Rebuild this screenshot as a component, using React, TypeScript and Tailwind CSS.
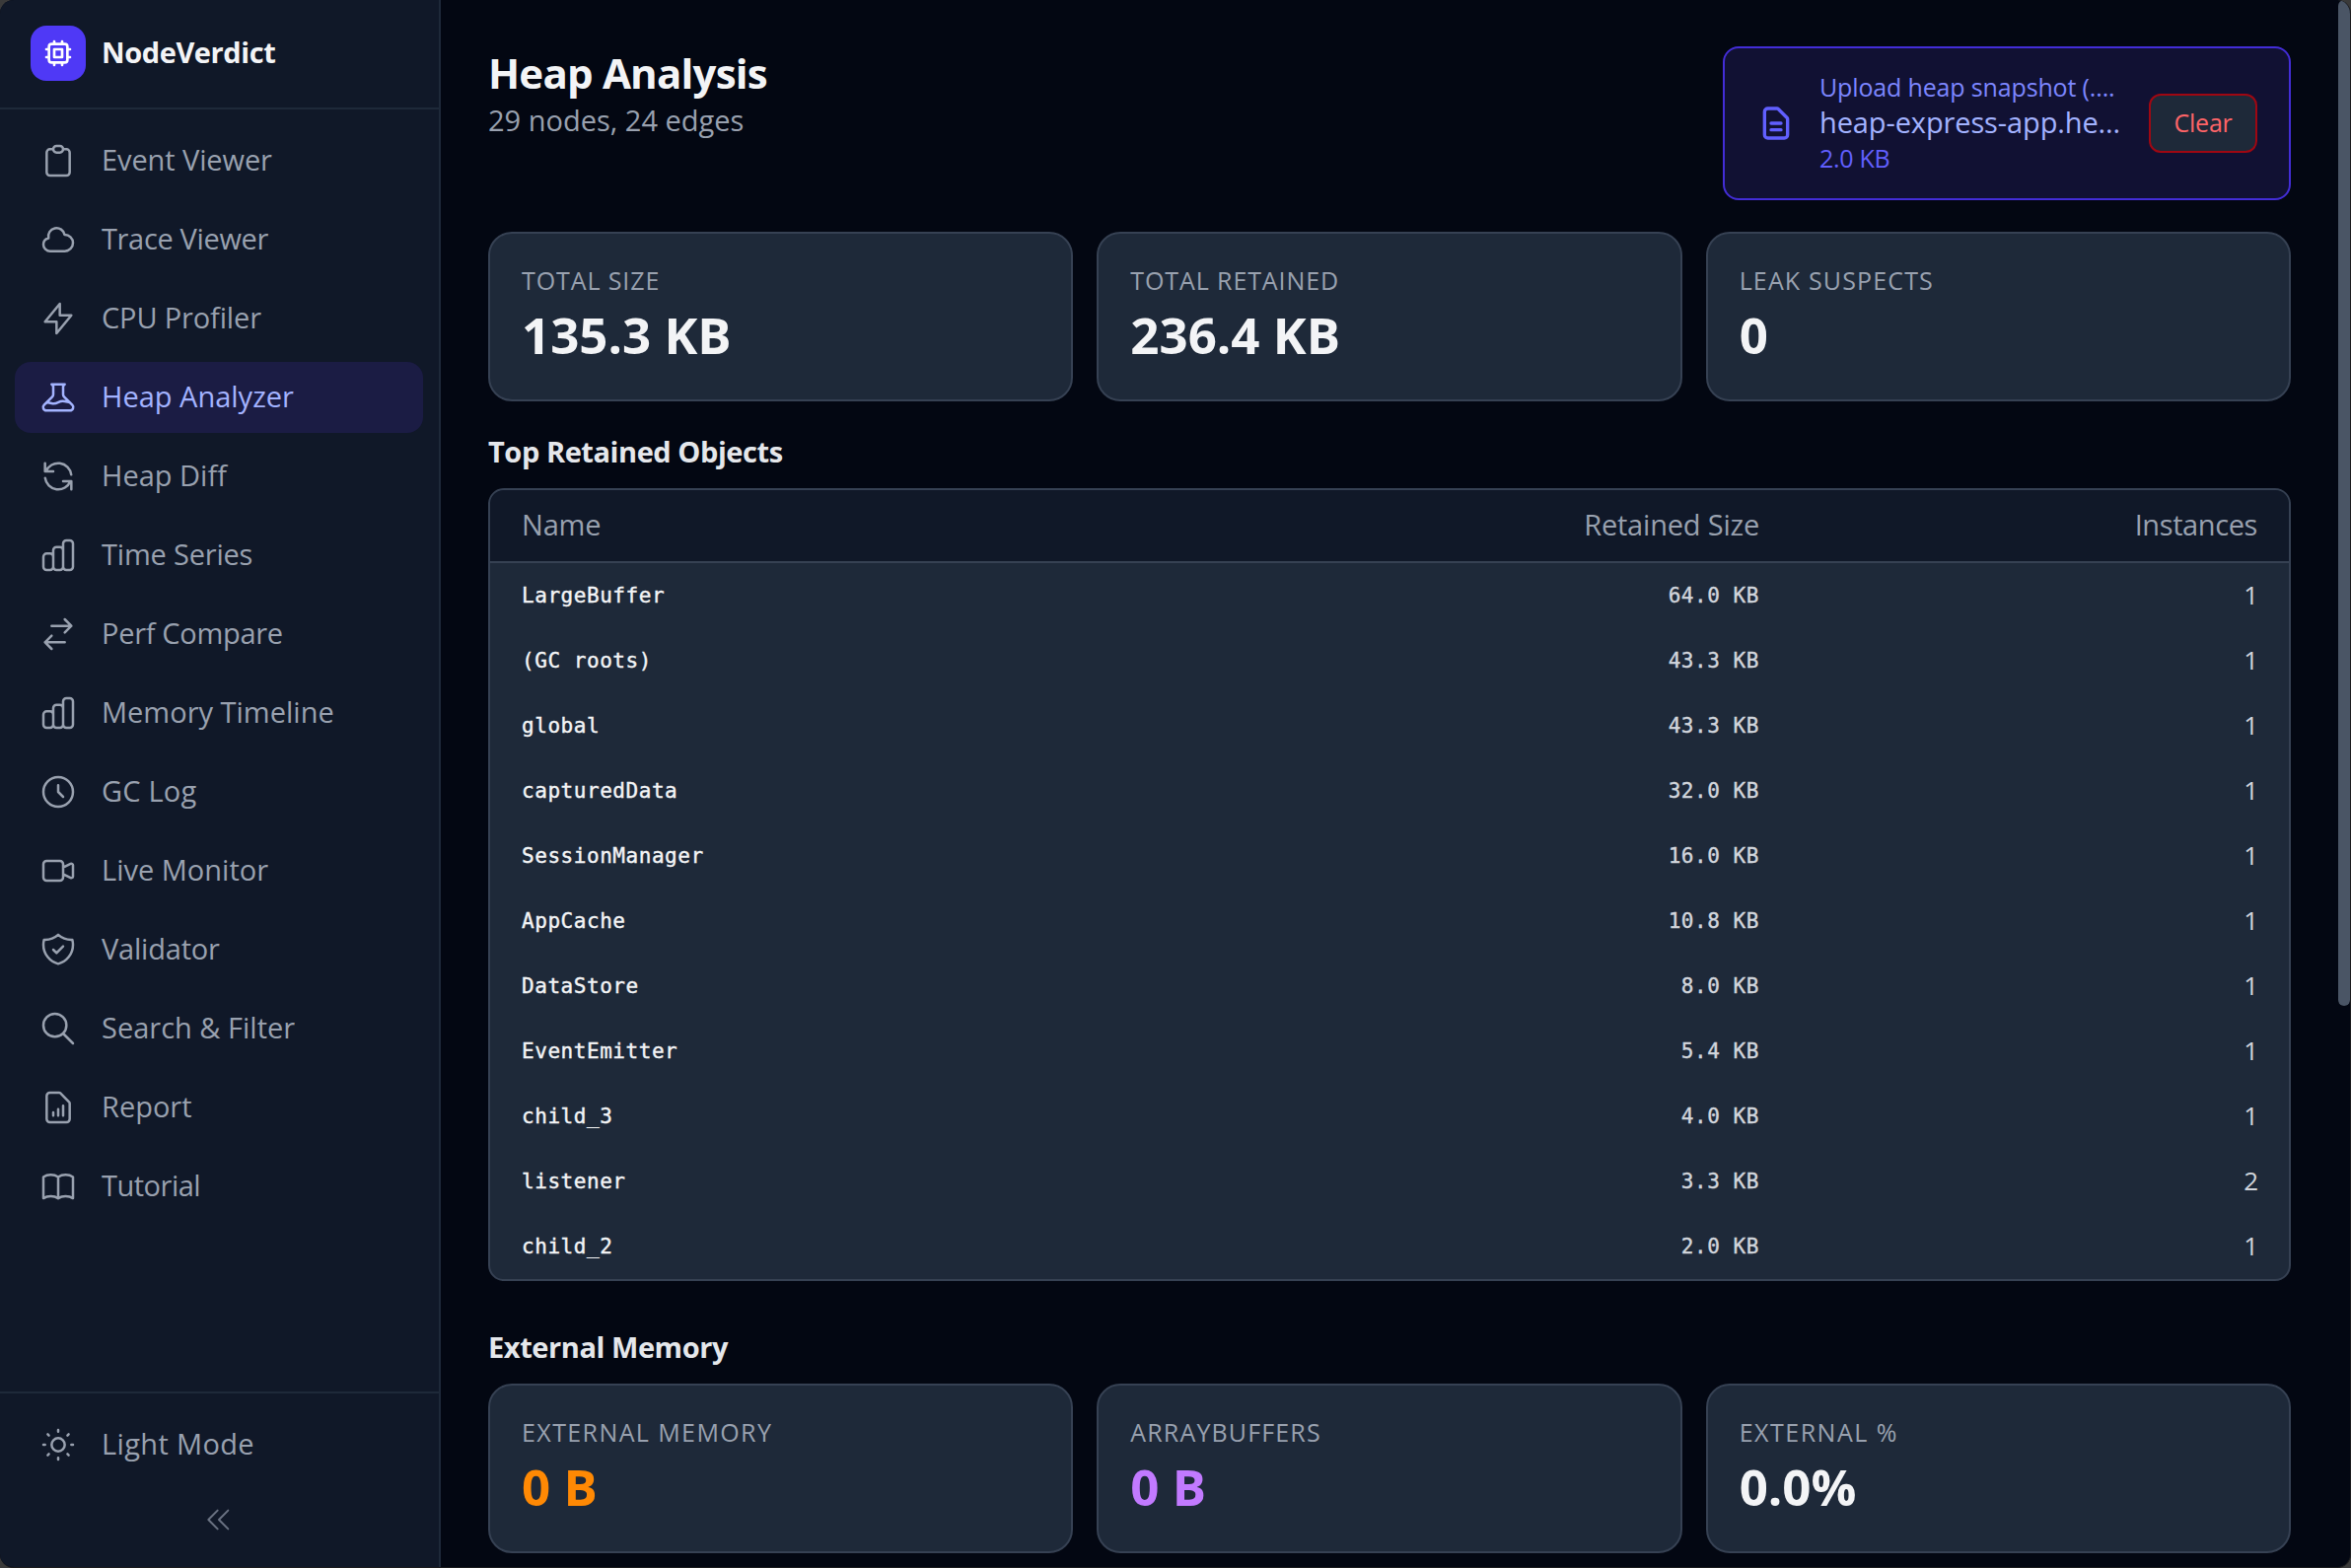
import React from 'react';
import { clsx } from 'clsx';

interface IconProps {
  d: string;
  className?: string;
  strokeWidth?: number;
}

const Icon: React.FC<IconProps> = ({ d, className, strokeWidth = 1.5 }) => (
  <svg className={clsx('shrink-0', className)} fill="none" viewBox="0 0 24 24" stroke="currentColor" strokeWidth={strokeWidth}>
    <path strokeLinecap="round" strokeLinejoin="round" d={d} />
  </svg>
);

const BARS =
  'M9 19v-6a2 2 0 00-2-2H5a2 2 0 00-2 2v6a2 2 0 002 2h2a2 2 0 002-2zm0 0V9a2 2 0 012-2h2a2 2 0 012 2v10m-6 0a2 2 0 002 2h2a2 2 0 002-2m0 0V5a2 2 0 012-2h2a2 2 0 012 2v14a2 2 0 01-2 2h-2a2 2 0 01-2-2z';

interface NavItemProps {
  label: string;
  d: string;
  active?: boolean;
  labelClass?: string;
}

const NAV_ITEMS: NavItemProps[] = [
  { label: 'Event Viewer', labelClass: 'tracking-[-0.1px]', d: 'M9 5H7a2 2 0 00-2 2v12a2 2 0 002 2h10a2 2 0 002-2V7a2 2 0 00-2-2h-2M9 5a2 2 0 002 2h2a2 2 0 002-2M9 5a2 2 0 012-2h2a2 2 0 012 2' },
  { label: 'Trace Viewer', labelClass: 'tracking-[-0.35px]', d: 'M3 15a4 4 0 004 4h9a5 5 0 10-.1-9.999 5.002 5.002 0 10-9.78 2.096A4.001 4.001 0 003 15z' },
  { label: 'CPU Profiler', labelClass: 'tracking-[-0.15px]', d: 'M13 10V3L4 14h7v7l9-11h-7z' },
  { label: 'Heap Analyzer', active: true, d: 'M19.428 15.428a2 2 0 00-1.022-.547l-2.387-.477a6 6 0 00-3.86.517l-.318.158a6 6 0 01-3.86.517L6.05 15.21a2 2 0 00-1.806.547M8 4h8l-1 1v5.172a2 2 0 00.586 1.414l5 5c1.26 1.26.367 3.414-1.415 3.414H4.828c-1.782 0-2.674-2.154-1.414-3.414l5-5A2 2 0 009 10.172V5L8 4z' },
  { label: 'Heap Diff', d: 'M4 4v5h.582m15.356 2A8.001 8.001 0 004.582 9m0 0H9m11 11v-5h-.581m0 0a8.003 8.003 0 01-15.357-2m15.357 2H15' },
  { label: 'Time Series', labelClass: 'tracking-[-0.2px]', d: BARS },
  { label: 'Perf Compare', labelClass: 'tracking-[-0.3px]', d: 'M8 7h12m0 0l-4-4m4 4l-4 4m0 6H4m0 0l4 4m-4-4l4-4' },
  { label: 'Memory Timeline', d: BARS },
  { label: 'GC Log', labelClass: 'tracking-[0.2px]', d: 'M12 8v4l3 3m6-3a9 9 0 11-18 0 9 9 0 0118 0z' },
  { label: 'Live Monitor', d: 'M15 10l4.553-2.276A1 1 0 0121 8.618v6.764a1 1 0 01-1.447.894L15 14M5 18h8a2 2 0 002-2V8a2 2 0 00-2-2H5a2 2 0 00-2 2v8a2 2 0 002 2z' },
  { label: 'Validator', labelClass: 'tracking-[-0.2px]', d: 'M9 12l2 2 4-4m5.618-4.016A11.955 11.955 0 0112 2.944a11.955 11.955 0 01-8.618 3.04A12.02 12.02 0 003 9c0 5.591 3.824 10.29 9 11.622 5.176-1.332 9-6.03 9-11.622 0-1.042-.133-2.052-.382-3.016z' },
  { label: 'Search & Filter', d: 'M21 21l-6-6m2-5a7 7 0 11-14 0 7 7 0 0114 0z' },
  { label: 'Report', d: 'M9 17v-2m3 2v-4m3 4v-6m2 10H7a2 2 0 01-2-2V5a2 2 0 012-2h5.586a1 1 0 01.707.293l5.414 5.414a1 1 0 01.293.707V19a2 2 0 01-2 2z' },
  { label: 'Tutorial', labelClass: 'tracking-[-0.5px]', d: 'M12 6.253v13m0-13C10.832 5.477 9.246 5 7.5 5S4.168 5.477 3 6.253v13C4.168 18.477 5.754 18 7.5 18s3.332.477 4.5 1.253m0-13C13.168 5.477 14.754 5 16.5 5c1.747 0 3.332.477 4.5 1.253v13C19.832 18.477 18.247 18 16.5 18c-1.746 0-3.332.477-4.5 1.253' },
];

const OBJECTS = [
  { name: 'LargeBuffer', size: '64.0 KB', instances: 1 },
  { name: '(GC roots)', size: '43.3 KB', instances: 1 },
  { name: 'global', size: '43.3 KB', instances: 1 },
  { name: 'capturedData', size: '32.0 KB', instances: 1 },
  { name: 'SessionManager', size: '16.0 KB', instances: 1 },
  { name: 'AppCache', size: '10.8 KB', instances: 1 },
  { name: 'DataStore', size: '8.0 KB', instances: 1 },
  { name: 'EventEmitter', size: '5.4 KB', instances: 1 },
  { name: 'child_3', size: '4.0 KB', instances: 1 },
  { name: 'listener', size: '3.3 KB', instances: 2 },
  { name: 'child_2', size: '2.0 KB', instances: 1 },
];

const NavItem: React.FC<NavItemProps> = ({ label, d, active, labelClass }) => (
  <button
    className={clsx(
      'flex h-[72px] w-full shrink-0 items-center gap-6 rounded-2xl px-6 text-[29px]',
      active ? 'bg-[#1b1c44] text-indigo-300' : 'text-gray-400'
    )}
  >
    <Icon d={d} className="size-10" />
    <span className={clsx('pb-[3px] leading-[37px] whitespace-nowrap', labelClass)}>{label}</span>
  </button>
);

interface StatCardProps {
  label: string;
  value: string;
  labelClass?: string;
  valueClass?: string;
}

const StatCard: React.FC<StatCardProps> = ({ label, value, labelClass = 'tracking-[0.9px]', valueClass = 'text-gray-100' }) => (
  <div className="h-[172px] rounded-3xl border-2 border-gray-700 bg-gray-800 p-8">
    <p className={clsx('pb-0.5 text-[25px] leading-[30px] text-gray-400 uppercase', labelClass)}>{label}</p>
    <p className={clsx('mt-2 pb-[3px] text-[51px] leading-[61px] font-bold', valueClass)}>{value}</p>
  </div>
);

const Sidebar: React.FC = () => (
  <aside className="flex w-[447px] shrink-0 flex-col border-r-2 border-gray-800 bg-gray-900">
    <div className="flex h-[111px] shrink-0 items-center gap-4 border-b-2 border-gray-800 pb-px pl-[31px]">
      <div className="flex size-14 items-center justify-center rounded-2xl bg-indigo-600">
        <Icon
          d="M9 3v2m6-2v2M9 19v2m6-2v2M5 9H3m2 6H3m18-6h-2m2 6h-2M7 19h10a2 2 0 002-2V7a2 2 0 00-2-2H7a2 2 0 00-2 2v10a2 2 0 002 2zM9 9h6v6H9V9z"
          className="size-8 text-white"
          strokeWidth={2}
        />
      </div>
      <span className="pb-[3px] text-[29px] leading-[37px] font-bold tracking-[-0.4px] text-gray-100">NodeVerdict</span>
    </div>
    <nav className="flex flex-1 flex-col gap-2 py-4 pr-4 pl-[15px]">
      {NAV_ITEMS.map((item) => (
        <NavItem key={item.label} {...item} />
      ))}
    </nav>
    <div className="flex flex-col gap-2 border-t-2 border-gray-800 py-4 pr-4 pl-[15px]">
      <NavItem
        label="Light Mode"
        labelClass="tracking-[0.35px]"
        d="M12 3v1m0 16v1m9-9h-1M4 12H3m15.364 6.364l-.707-.707M6.343 6.343l-.707-.707m12.728 0l-.707.707M6.343 17.657l-.707.707M16 12a4 4 0 11-8 0 4 4 0 018 0z"
      />
      <button className="flex h-16 items-center justify-center text-gray-500">
        <Icon d="M11 19l-7-7 7-7m8 14l-7-7 7-7" className="size-8" />
      </button>
    </div>
  </aside>
);

const UploadBox: React.FC = () => (
  <div className="flex h-[156px] w-[576px] items-center gap-6 rounded-2xl border-2 border-indigo-700 bg-[#111133] px-8">
    <Icon
      d="M9 12h6m-6 4h6m2 5H7a2 2 0 01-2-2V5a2 2 0 012-2h5.586a1 1 0 01.707.293l5.414 5.414a1 1 0 01.293.707V19a2 2 0 01-2 2z"
      className="size-10 text-indigo-500"
      strokeWidth={2}
    />
    <div className="min-w-0 flex-1 whitespace-nowrap">
      <p className="pb-0.5 text-[25px] leading-[30px] tracking-[-0.15px] text-indigo-400">Upload heap snapshot (....</p>
      <p className="pb-[3px] text-[29px] leading-[37px] tracking-[-0.12px] text-indigo-300">heap-express-app.he...</p>
      <p className="pb-0.5 text-[25px] leading-[30px] tracking-[-0.3px] text-indigo-500">2.0 KB</p>
    </div>
    <button className="h-[60px] w-[110px] shrink-0 rounded-xl border-2 border-red-800 bg-gray-800 pb-0.5 text-[25px] leading-[30px] tracking-[-0.2px] text-red-400">
      Clear
    </button>
  </div>
);

const RetainedTable: React.FC = () => (
  <div className="overflow-hidden rounded-2xl border-2 border-gray-700 bg-gray-800">
    <div className="grid h-[74px] grid-cols-[1fr_500px_506px] items-center border-b-2 border-gray-700 bg-gray-900 pb-0.5 text-[29px] leading-10 text-gray-400">
      <span className="px-8 tracking-[-0.2px]">Name</span>
      <span className="pr-[31px] text-right tracking-[-0.2px]">Retained Size</span>
      <span className="px-8 text-right tracking-[-0.4px]">Instances</span>
    </div>
    {OBJECTS.map((row) => (
      <div key={row.name} className="grid h-[66px] grid-cols-[1fr_500px_506px] items-center pb-0.5">
        <span className="px-8 pt-[3px] font-['DejaVu_Sans_Mono',monospace] text-[21px] tracking-[0.55px] text-gray-100 [-webkit-text-stroke:0.4px]">
          {row.name}
        </span>
        <span className="pt-[3px] pr-[31px] text-right font-['DejaVu_Sans_Mono',monospace] text-[21px] tracking-[0.55px] text-gray-300 [-webkit-text-stroke:0.4px]">
          {row.size}
        </span>
        <span className="pr-[31px] text-right text-[26px] leading-10 text-gray-300">{row.instances}</span>
      </div>
    ))}
  </div>
);

const SectionTitle: React.FC<{ children: React.ReactNode }> = ({ children }) => (
  <h2 className="mb-4 pb-[3px] text-[29px] leading-[37px] font-bold tracking-[-0.43px] text-gray-200">{children}</h2>
);

export default function App() {
  return (
    // Window frame showing behind the rounded corners
    <div className="h-[1590px] w-[2384px] overflow-hidden bg-[#3a3a3a] font-['Open_Sans',sans-serif]">
      <div className="flex h-full overflow-hidden rounded-[14px] border-r border-b border-[#1c1c1e] bg-gray-950">
        <Sidebar />
        <main className="min-w-0 flex-1 px-12 pt-[47px]">
          <header className="mb-8 flex items-start justify-between">
            <div>
              <h1 className="pb-[3px] text-[42px] leading-[53px] font-bold tracking-[-0.78px] text-gray-100">Heap Analysis</h1>
              <p className="pb-[3px] text-[29px] leading-[37px] text-gray-400">29 nodes, 24 edges</p>
            </div>
            <UploadBox />
          </header>
          <section className="mb-8 grid grid-cols-3 gap-6">
            <StatCard label="Total Size" value="135.3 KB" />
            <StatCard label="Total Retained" value="236.4 KB" />
            <StatCard label="Leak Suspects" value="0" labelClass="tracking-[1.15px]" />
          </section>
          <section className="mb-12">
            <SectionTitle>Top Retained Objects</SectionTitle>
            <RetainedTable />
          </section>
          <section>
            <SectionTitle>External Memory</SectionTitle>
            <div className="grid grid-cols-3 gap-6">
              <StatCard label="External Memory" value="0 B" labelClass="tracking-[1.4px]" valueClass="text-[#ff8904]" />
              <StatCard label="ArrayBuffers" value="0 B" labelClass="tracking-[1.15px]" valueClass="text-[#c27aff]" />
              <StatCard label="External %" value="0.0%" labelClass="tracking-[1.5px]" />
            </div>
          </section>
        </main>
        {/* Scroll thumb */}
        <div className="w-3 shrink-0">
          <div className="h-[1020px] rounded-full bg-gray-600" />
        </div>
      </div>
    </div>
  );
}
